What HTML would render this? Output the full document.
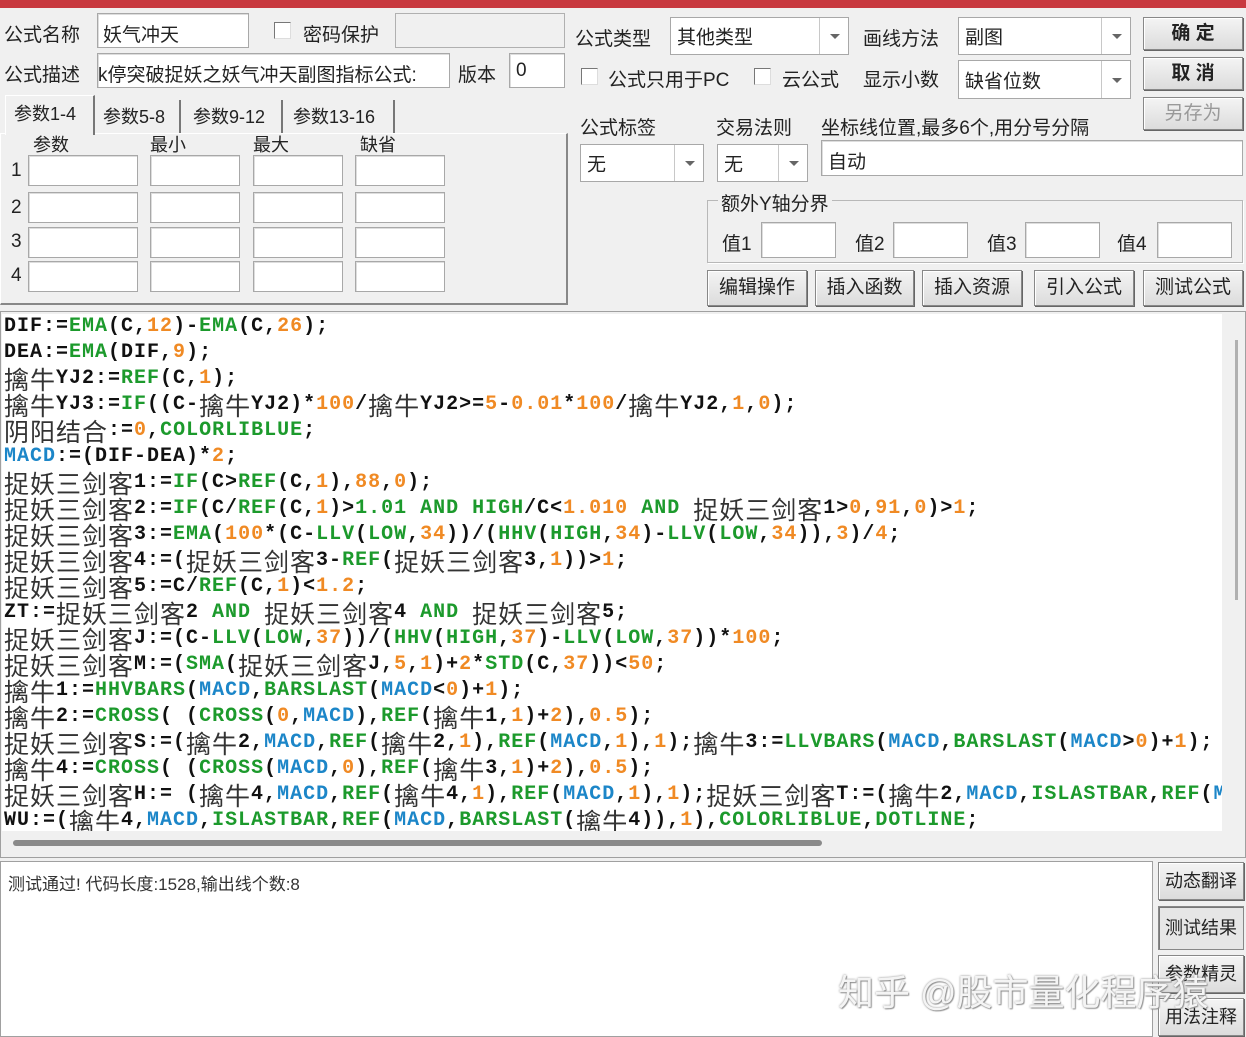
<!DOCTYPE html>
<html><head><meta charset="utf-8">
<style>
*{box-sizing:border-box;margin:0;padding:0}
body{width:1246px;height:1037px;background:#f0f0f0;position:relative;overflow:hidden;font-family:"Liberation Sans","Noto Sans CJK SC",sans-serif;font-size:19px;color:#222}
.a{position:absolute;white-space:nowrap}
.in{position:absolute;background:#fff;border:1px solid #a8a8a8;box-shadow:inset 1px 1px 0 #ddd}
.sel{position:absolute;background:#fff;border:1px solid #a8a8a8}
.sel .ar{position:absolute;right:0;top:0;bottom:0;width:29px;border-left:1px solid #c8c8c8}
.sel .ar:after{content:"";position:absolute;left:10px;top:50%;margin-top:-2px;border:5px solid transparent;border-top:5px solid #666}
.sel span{position:absolute;left:6px;top:50%;transform:translateY(-50%)}
.btn{position:absolute;background:linear-gradient(#f4f4f4,#dcdcdc);border:1px solid #888;box-shadow:inset 1px 1px 0 #fff,1px 1px 0 #666;text-align:center;font-size:19px}
.cb{position:absolute;width:17px;height:17px;background:#fff;border:1px solid #777;border-right-color:#ddd;border-bottom-color:#ddd}
.code{position:absolute;left:2px;top:314px;width:1220px;height:517px;background:#fff;overflow:hidden}
.code div{height:26px;line-height:26px;overflow:hidden;font-family:"Liberation Mono",monospace;font-weight:bold;font-size:20px;letter-spacing:1px;color:#111;white-space:nowrap;padding-left:2px}
.g{color:#1c9a2c}.o{color:#f08a24}.b{color:#1c86c8}
.z{font-family:"Noto Sans CJK SC",sans-serif;font-weight:normal;font-size:25px;letter-spacing:1px;color:#333;line-height:26px;display:inline-block;vertical-align:top;height:26px}
</style></head><body>
<div class="a" style="left:0;top:0;width:1246px;height:8px;background:#c8393f"></div>

<div class="a" style="left:4px;top:20px">公式名称</div>
<div class="in" style="left:97px;top:13px;width:152px;height:35px"></div>
<div class="a" style="left:103px;top:20px">妖气冲天</div>
<div class="cb" style="left:274px;top:22px"></div>
<div class="a" style="left:303px;top:20px">密码保护</div>
<div class="a" style="left:395px;top:13px;width:170px;height:35px;border:1px solid #b0b0b0;background:#f0f0f0"></div>

<div class="a" style="left:4px;top:60px">公式描述</div>
<div class="in" style="left:97px;top:53px;width:353px;height:35px;overflow:hidden"><span style="position:absolute;left:0;top:6px;white-space:nowrap">k停突破捉妖之妖气冲天副图指标公式:</span></div>
<div class="a" style="left:458px;top:60px">版本</div>
<div class="in" style="left:509px;top:53px;width:56px;height:35px"><span style="position:absolute;left:6px;top:6px">0</span></div>

<div class="a" style="left:0;top:133px;width:568px;height:172px;border:1px solid #fff;border-right:2px solid #888;border-bottom:2px solid #888"></div>
<div class="a" style="left:5px;top:95px;width:90px;height:40px;background:#f0f0f0;border:1px solid #fff;border-right:2px solid #777;border-bottom:none;font-size:18px;padding:4px 0 0 8px">参数1-4</div>
<div class="a" style="left:97px;top:100px;width:84px;height:33px;border-right:2px solid #777;font-size:18px;padding:3px 0 0 6px">参数5-8</div>
<div class="a" style="left:183px;top:100px;width:100px;height:33px;border-right:2px solid #777;font-size:18px;padding:3px 0 0 10px">参数9-12</div>
<div class="a" style="left:285px;top:100px;width:110px;height:33px;border-right:2px solid #777;font-size:18px;padding:3px 0 0 8px">参数13-16</div>
<div class="a" style="left:33px;top:131px;font-size:18px">参数</div>
<div class="a" style="left:150px;top:131px;font-size:18px">最小</div>
<div class="a" style="left:253px;top:131px;font-size:18px">最大</div>
<div class="a" style="left:360px;top:131px;font-size:18px">缺省</div>
<div class="a" style="left:11px;top:160px">1</div><div class="a" style="left:11px;top:197px">2</div><div class="a" style="left:11px;top:231px">3</div><div class="a" style="left:11px;top:265px">4</div>
<div class="in" style="left:28px;top:155px;width:110px;height:31px"></div><div class="in" style="left:150px;top:155px;width:90px;height:31px"></div><div class="in" style="left:253px;top:155px;width:90px;height:31px"></div><div class="in" style="left:355px;top:155px;width:90px;height:31px"></div>
<div class="in" style="left:28px;top:192px;width:110px;height:31px"></div><div class="in" style="left:150px;top:192px;width:90px;height:31px"></div><div class="in" style="left:253px;top:192px;width:90px;height:31px"></div><div class="in" style="left:355px;top:192px;width:90px;height:31px"></div>
<div class="in" style="left:28px;top:227px;width:110px;height:31px"></div><div class="in" style="left:150px;top:227px;width:90px;height:31px"></div><div class="in" style="left:253px;top:227px;width:90px;height:31px"></div><div class="in" style="left:355px;top:227px;width:90px;height:31px"></div>
<div class="in" style="left:28px;top:261px;width:110px;height:31px"></div><div class="in" style="left:150px;top:261px;width:90px;height:31px"></div><div class="in" style="left:253px;top:261px;width:90px;height:31px"></div><div class="in" style="left:355px;top:261px;width:90px;height:31px"></div>

<div class="a" style="left:575px;top:24px">公式类型</div>
<div class="sel" style="left:670px;top:17px;width:179px;height:38px"><span>其他类型</span><div class="ar"></div></div>
<div class="a" style="left:863px;top:24px">画线方法</div>
<div class="sel" style="left:958px;top:17px;width:173px;height:38px"><span>副图</span><div class="ar"></div></div>
<div class="btn" style="left:1143px;top:17px;width:100px;height:33px;line-height:31px;font-weight:bold">确 定</div>
<div class="btn" style="left:1143px;top:57px;width:100px;height:33px;line-height:31px;font-weight:bold">取 消</div>
<div class="btn" style="left:1143px;top:97px;width:100px;height:33px;line-height:31px;color:#999">另存为</div>

<div class="cb" style="left:581px;top:68px"></div>
<div class="a" style="left:608px;top:65px">公式只用于PC</div>
<div class="cb" style="left:754px;top:68px"></div>
<div class="a" style="left:782px;top:65px">云公式</div>
<div class="a" style="left:863px;top:65px">显示小数</div>
<div class="sel" style="left:958px;top:60px;width:173px;height:39px"><span>缺省位数</span><div class="ar"></div></div>

<div class="a" style="left:580px;top:113px">公式标签</div>
<div class="a" style="left:716px;top:113px">交易法则</div>
<div class="a" style="left:821px;top:113px">坐标线位置,最多6个,用分号分隔</div>
<div class="sel" style="left:580px;top:144px;width:124px;height:38px"><span>无</span><div class="ar"></div></div>
<div class="sel" style="left:717px;top:144px;width:91px;height:38px"><span>无</span><div class="ar"></div></div>
<div class="in" style="left:821px;top:140px;width:422px;height:36px"><span style="position:absolute;left:6px;top:6px">自动</span></div>

<div class="a" style="left:707px;top:200px;width:536px;height:63px;border:1px solid #b8b8b8;box-shadow:1px 1px 0 #fff"></div>
<div class="a" style="left:718px;top:189px;background:#f0f0f0;padding:0 3px">额外Y轴分界</div>
<div class="a" style="left:722px;top:229px">值1</div><div class="in" style="left:761px;top:222px;width:75px;height:36px"></div>
<div class="a" style="left:855px;top:229px">值2</div><div class="in" style="left:893px;top:222px;width:75px;height:36px"></div>
<div class="a" style="left:987px;top:229px">值3</div><div class="in" style="left:1025px;top:222px;width:75px;height:36px"></div>
<div class="a" style="left:1117px;top:229px">值4</div><div class="in" style="left:1157px;top:222px;width:75px;height:36px"></div>

<div class="btn" style="left:707px;top:270px;width:100px;height:36px;line-height:34px">编辑操作</div>
<div class="btn" style="left:815px;top:270px;width:99px;height:36px;line-height:34px">插入函数</div>
<div class="btn" style="left:922px;top:270px;width:100px;height:36px;line-height:34px">插入资源</div>
<div class="btn" style="left:1034px;top:270px;width:100px;height:36px;line-height:34px">引入公式</div>
<div class="btn" style="left:1143px;top:270px;width:100px;height:36px;line-height:34px">测试公式</div>

<div class="a" style="left:0;top:311px;width:1246px;height:547px;border:1px solid #a0a0a0;background:#f0f0f0"></div>
<div class="code">
<div>DIF:=<span class="g">EMA</span>(C,<span class="o">12</span>)-<span class="g">EMA</span>(C,<span class="o">26</span>);</div>
<div>DEA:=<span class="g">EMA</span>(DIF,<span class="o">9</span>);</div>
<div><span class="z">擒牛</span>YJ2:=<span class="g">REF</span>(C,<span class="o">1</span>);</div>
<div><span class="z">擒牛</span>YJ3:=<span class="g">IF</span>((C-<span class="z">擒牛</span>YJ2)*<span class="o">100</span>/<span class="z">擒牛</span>YJ2&gt;=<span class="o">5</span>-<span class="o">0.01</span>*<span class="o">100</span>/<span class="z">擒牛</span>YJ2,<span class="o">1</span>,<span class="o">0</span>);</div>
<div><span class="z">阴阳结合</span>:=<span class="o">0</span>,<span class="g">COLORLIBLUE</span>;</div>
<div><span class="b">MACD</span>:=(DIF-DEA)*<span class="o">2</span>;</div>
<div><span class="z">捉妖三剑客</span>1:=<span class="g">IF</span>(C&gt;<span class="g">REF</span>(C,<span class="o">1</span>),<span class="o">88</span>,<span class="o">0</span>);</div>
<div><span class="z">捉妖三剑客</span>2:=<span class="g">IF</span>(C/<span class="g">REF</span>(C,<span class="o">1</span>)&gt;<span class="g">1.01 AND HIGH</span>/C&lt;<span class="o">1.010</span> <span class="g">AND</span> <span class="z">捉妖三剑客</span>1&gt;<span class="o">0</span>,<span class="o">91</span>,<span class="o">0</span>)&gt;<span class="o">1</span>;</div>
<div><span class="z">捉妖三剑客</span>3:=<span class="g">EMA</span>(<span class="o">100</span>*(C-<span class="g">LLV</span>(<span class="g">LOW</span>,<span class="o">34</span>))/(<span class="g">HHV</span>(<span class="g">HIGH</span>,<span class="o">34</span>)-<span class="g">LLV</span>(<span class="g">LOW</span>,<span class="o">34</span>)),<span class="o">3</span>)/<span class="o">4</span>;</div>
<div><span class="z">捉妖三剑客</span>4:=(<span class="z">捉妖三剑客</span>3-<span class="g">REF</span>(<span class="z">捉妖三剑客</span>3,<span class="o">1</span>))&gt;<span class="o">1</span>;</div>
<div><span class="z">捉妖三剑客</span>5:=C/<span class="g">REF</span>(C,<span class="o">1</span>)&lt;<span class="o">1.2</span>;</div>
<div>ZT:=<span class="z">捉妖三剑客</span>2 <span class="g">AND</span> <span class="z">捉妖三剑客</span>4 <span class="g">AND</span> <span class="z">捉妖三剑客</span>5;</div>
<div><span class="z">捉妖三剑客</span>J:=(C-<span class="g">LLV</span>(<span class="g">LOW</span>,<span class="o">37</span>))/(<span class="g">HHV</span>(<span class="g">HIGH</span>,<span class="o">37</span>)-<span class="g">LLV</span>(<span class="g">LOW</span>,<span class="o">37</span>))*<span class="o">100</span>;</div>
<div><span class="z">捉妖三剑客</span>M:=(<span class="g">SMA</span>(<span class="z">捉妖三剑客</span>J,<span class="o">5</span>,<span class="o">1</span>)+<span class="o">2</span>*<span class="g">STD</span>(C,<span class="o">37</span>))&lt;<span class="o">50</span>;</div>
<div><span class="z">擒牛</span>1:=<span class="g">HHVBARS</span>(<span class="b">MACD</span>,<span class="g">BARSLAST</span>(<span class="b">MACD</span>&lt;<span class="o">0</span>)+<span class="o">1</span>);</div>
<div><span class="z">擒牛</span>2:=<span class="g">CROSS</span>( (<span class="g">CROSS</span>(<span class="o">0</span>,<span class="b">MACD</span>),<span class="g">REF</span>(<span class="z">擒牛</span>1,<span class="o">1</span>)+<span class="o">2</span>),<span class="o">0.5</span>);</div>
<div><span class="z">捉妖三剑客</span>S:=(<span class="z">擒牛</span>2,<span class="b">MACD</span>,<span class="g">REF</span>(<span class="z">擒牛</span>2,<span class="o">1</span>),<span class="g">REF</span>(<span class="b">MACD</span>,<span class="o">1</span>),<span class="o">1</span>);<span class="z">擒牛</span>3:=<span class="g">LLVBARS</span>(<span class="b">MACD</span>,<span class="g">BARSLAST</span>(<span class="b">MACD</span>&gt;<span class="o">0</span>)+<span class="o">1</span>);</div>
<div><span class="z">擒牛</span>4:=<span class="g">CROSS</span>( (<span class="g">CROSS</span>(<span class="b">MACD</span>,<span class="o">0</span>),<span class="g">REF</span>(<span class="z">擒牛</span>3,<span class="o">1</span>)+<span class="o">2</span>),<span class="o">0.5</span>);</div>
<div><span class="z">捉妖三剑客</span>H:= (<span class="z">擒牛</span>4,<span class="b">MACD</span>,<span class="g">REF</span>(<span class="z">擒牛</span>4,<span class="o">1</span>),<span class="g">REF</span>(<span class="b">MACD</span>,<span class="o">1</span>),<span class="o">1</span>);<span class="z">捉妖三剑客</span>T:=(<span class="z">擒牛</span>2,<span class="b">MACD</span>,<span class="g">ISLASTBAR</span>,<span class="g">REF</span>(<span class="b">MACD</span>,</div>
<div>WU:=(<span class="z">擒牛</span>4,<span class="b">MACD</span>,<span class="g">ISLASTBAR</span>,<span class="g">REF</span>(<span class="b">MACD</span>,<span class="g">BARSLAST</span>(<span class="z">擒牛</span>4)),<span class="o">1</span>),<span class="g">COLORLIBLUE</span>,<span class="g">DOTLINE</span>;</div>
</div>
<div class="a" style="left:1235px;top:340px;width:3px;height:260px;background:#b0b0b0"></div>
<div class="a" style="left:13px;top:840px;width:809px;height:6px;background:#8a8a8a;border-radius:3px"></div>

<div class="a" style="left:0;top:861px;width:1153px;height:176px;background:#fff;border:1px solid #a0a0a0"></div>
<div class="a" style="left:8px;top:870px;font-size:17px;color:#333">测试通过! 代码长度:1528,输出线个数:8</div>
<div class="btn" style="left:1158px;top:862px;width:86px;height:38px;line-height:36px;font-size:18px">动态翻译</div>
<div class="btn" style="left:1158px;top:906px;width:86px;height:44px;line-height:42px;font-size:18px;background:#e6e6e6;box-shadow:inset 1px 1px 0 #777">测试结果</div>
<div class="btn" style="left:1158px;top:955px;width:86px;height:38px;line-height:36px;font-size:18px">参数精灵</div>
<div class="btn" style="left:1158px;top:998px;width:86px;height:38px;line-height:36px;font-size:18px">用法注释</div>
<div class="a" style="left:838px;top:964px;font-size:36px;color:#f4f4f4;text-shadow:0 0 2px #888,1px 1px 1px #999">知乎 @股市量化程序猿</div>
</body></html>
